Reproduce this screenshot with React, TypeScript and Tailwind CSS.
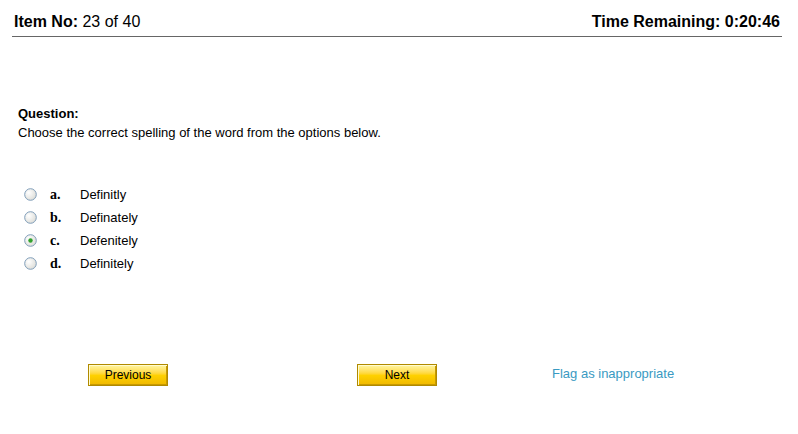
import React from "react";

const options = [
  { l: "a.", t: "Definitly", checked: false },
  { l: "b.", t: "Definately", checked: false },
  { l: "c.", t: "Defenitely", checked: true },
  { l: "d.", t: "Definitely", checked: false },
];

function Radio({ checked }: { checked: boolean }) {
  return (
    <svg width="13" height="13" viewBox="0 0 13 13">
      <defs>
        <radialGradient id="rg" cx="0.35" cy="0.35" r="0.8">
          <stop offset="0" stopColor="#ffffff" />
          <stop offset="1" stopColor="#d8d8d2" />
        </radialGradient>
      </defs>
      <circle cx="6.5" cy="6.5" r="5.8" fill="url(#rg)" stroke="#7f9db9" strokeWidth="1" />
      {checked && <circle cx="6.5" cy="6.5" r="2.2" fill="#32a12f" />}
    </svg>
  );
}

function YButton({ label }: { label: string }) {
  return (
    <button className="w-[80px] h-[22px] border border-[#b08a00] bg-gradient-to-b from-[#fff6a0] via-[#ffd200] to-[#f0b800] text-[12px] text-black leading-none shadow-[inset_1px_1px_0_#fffbd0,inset_-1px_-1px_0_#c89a00]">
      {label}
    </button>
  );
}

export default function App() {
  return (
    <div className="w-[798px] h-[434px] bg-white text-black" style={{ fontFamily: '"Liberation Sans", Arial, sans-serif' }}>
      <div className="ml-[12px] mr-[16px] pt-[13px] border-b border-[#666] flex justify-between items-end pb-[5px]">
        <div className="text-[16px] leading-[18px] pl-[2px]">
          <span className="font-bold">Item No:</span> 23 of 40
        </div>
        <div className="text-[16px] leading-[18px] font-bold pr-[2px]">Time Remaining: 0:20:46</div>
      </div>
      <div className="pl-[18px] pt-[69px]">
        <div className="text-[13px] font-bold leading-[16px]">Question:</div>
        <div className="text-[13px] leading-[16px] mt-[3px]">Choose the correct spelling of the word from the options below.</div>
      </div>
      <div className="pl-[24px] pt-[46px] flex flex-col gap-[8px]">
        {options.map((o) => (
          <div key={o.l} className="flex items-center h-[15px]">
            <Radio checked={o.checked} />
            <span className="ml-[13px] w-[30px] text-[14px] font-bold" style={{ fontFamily: '"Liberation Serif", "Times New Roman", serif' }}>
              {o.l}
            </span>
            <span className="text-[13px]">{o.t}</span>
          </div>
        ))}
      </div>
      <div className="flex items-center pt-[91px]">
        <div className="ml-[88px]"><YButton label="Previous" /></div>
        <div className="ml-[189px]"><YButton label="Next" /></div>
        <a className="ml-[115px] text-[13px] text-[#3a9ac2]">Flag as inappropriate</a>
      </div>
    </div>
  );
}
